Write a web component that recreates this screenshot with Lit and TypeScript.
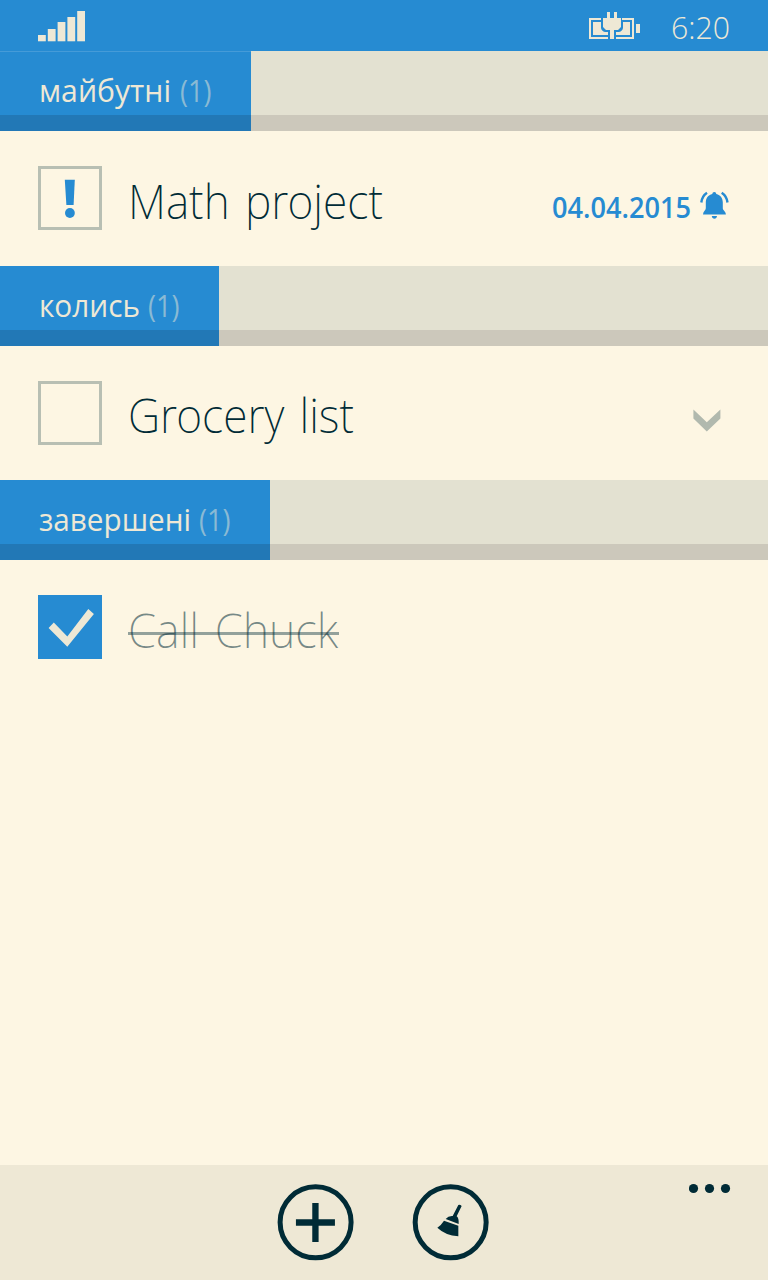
import { LitElement, html, css, svg, nothing } from "lit";
import { customElement, property } from "lit/decorators.js";

/** A single line of text fitted to an exact advance width. */
@customElement("fit-text")
class FitText extends LitElement {
  @property() text = "";
  @property({ type: Number }) width = 100;
  @property({ type: Number }) size = 32;
  @property({ type: Number }) weight = 400;
  @property({ type: Number }) baseline = 30;

  static styles = css`
    :host { display: block; flex: none; font-family: "Open Sans", "Noto Sans", sans-serif; }
    svg { display: block; overflow: visible; }
    text { fill: currentColor; }
  `;

  render() {
    return html`<svg width=${this.width} height="40">
      <text x="0" y=${this.baseline} font-size=${this.size} font-weight=${this.weight}
        textLength=${this.width} lengthAdjust="spacingAndGlyphs">${this.text}</text>
    </svg>`;
  }
}

@customElement("group-header")
class GroupHeader extends LitElement {
  @property() label = "";
  @property({ type: Number }) labelWidth = 100;
  @property({ type: Number }) gap = 9;
  @property({ type: Number }) tabWidth = 200;

  static styles = css`
    :host { display: block; height: 80px; background: linear-gradient(#e3e1d1 64px, #ccc8bb 64px); }
    .tab {
      box-sizing: border-box; height: 80px; padding: 21px 0 0 38.5px; display: flex;
      background: linear-gradient(#268bd2 64px, #2278b6 64px); color: #eee8d5;
    }
    :host(.first) .tab { box-shadow: inset 0 1px #459bd8; }
    .count { color: #8abad4; }
  `;

  render() {
    return html`<div class="tab" style="width:${this.tabWidth}px">
      <fit-text .text=${this.label} .width=${this.labelWidth} .size=${30.3} .baseline=${30.4}></fit-text>
      <fit-text class="count" style="margin-left:${this.gap}px" text="(1)" .width=${31.5} .size=${31} .baseline=${30.4}></fit-text>
    </div>`;
  }
}

@customElement("app-root")
class AppRoot extends LitElement {
  static styles = css`
    :host { display: flex; flex-direction: column; height: 1280px; width: 768px; background: #fdf6e3; color: #002b36; overflow: hidden; }
    svg { display: block; flex: none; }
    .status {
      height: 51px; box-sizing: border-box; flex: none; background: #268bd2; color: #eee8d5;
      display: flex; align-items: flex-start; padding: 11px 38px 0 38px;
    }
    .spacer { flex: 1; }
    .clock { margin: -2px 0 0 31px; }
    .power { margin-top: 1px; }
    .list { flex: 1; }
    .row { height: 134.5px; box-sizing: border-box; display: flex; align-items: flex-start; padding: 35.3px 38.4px 0; }
    .box { box-sizing: border-box; width: 64px; height: 64px; border: 3.2px solid #b8bfb3; flex: none; }
    .box svg { margin: -3px; }
    .done { background: #268bd2; border: 0; }
    .done svg { margin: 0; }
    .title { margin: 11.4px 0 0 25.6px; font-family: "Noto Sans", "Open Sans", sans-serif; word-spacing: 4px; }
    .struck { position: relative; color: rgba(0, 43, 54, 0.55); }
    .struck::after {
      content: ""; position: absolute; left: 0; right: -1px; top: 25.4px; height: 3.2px;
      background: rgba(0, 43, 54, 0.42);
    }
    .date { color: #268bd2; margin-top: 21.6px; }
    .bell { margin: 25.2px 0 0 9px; }
    .end { margin-right: 0.8px; display: flex; align-items: flex-start; }
    .chev { margin: 28.6px 8px 0 0; }
    .bar { height: 115px; flex: none; background: #eee8d5; display: grid; grid-template-columns: 277px 76px auto 1fr; }
    .bar .btn { margin-top: 19px; overflow: visible; }
    .bar .broom { margin-left: 59px; }
    .bar .more { justify-self: end; margin: 18px 37.5px 0 0; }
  `;

  row(icon: unknown, title: string, width: number, end: unknown, done = false) {
    return html`<div class="row">
      <div class="box ${done ? "done" : ""}">${icon}</div>
      <fit-text class="title ${done ? "struck" : ""}" .text=${title} .width=${width} .size=${47.5} .weight=${250} .baseline=${41.2}></fit-text>
      <div class="spacer"></div><div class="end">${end}</div>
    </div>`;
  }

  render() {
    const bars = [
      [0, 24], [9.8, 18], [19.6, 11], [29.4, 6], [39.2, 0],
    ].map(([x, y]) => svg`<rect x=${x} y=${y} width="7.8" height=${30.3 - y} />`);

    const alert = html`<svg width="64" height="64" viewBox="0 0 64 64" fill="#268bd2">
      <path d="M26.8 13.7H36.8L35.6 39H28.4Z" /><circle cx="31.9" cy="47" r="4.9" />
    </svg>`;
    const check = html`<svg width="64" height="64" viewBox="0 0 64 64" fill="#eee8d5">
      <path d="M10.6 33L15.8 27.5L29.3 41.5L50.3 14.1L55.9 19.1L29.3 51.8Z" />
    </svg>`;
    const bell = html`<svg class="bell" width="29" height="29" viewBox="0 0 29 29" fill="#268bd2">
      <path d="M14.3 1C15.5 1 16.2 1.8 16.3 3.1C20.6 4 22.8 7.6 22.8 11.6V17.3C22.8 19.2 25.9 20.7 25.9 23.5H3C3 20.7 5.8 19.2 5.8 17.3V11.6C5.8 7.6 8 4 12.3 3.1C12.4 1.8 13.1 1 14.3 1Z" />
      <path d="M11.8 25H17C16.8 26.8 15.8 27.8 14.4 27.8S12 26.8 11.8 25Z" />
      <path d="M7 1.7Q2 5 1.3 11.5M21.7 1.7Q26.8 5 27.5 11.5" fill="none" stroke="#268bd2" stroke-width="2.4" />
    </svg>`;
    const chevron = html`<svg class="chev" width="28" height="23" viewBox="0 0 28 23">
      <path d="M.4 .4L13.8 13.2L27.4 .4V9.6L13.8 22.4L.4 9.6Z" fill="#b1b9ae" />
    </svg>`;

    return html`
      <div class="status">
        <svg width="48" height="31" fill="#eee8d5">${bars}</svg>
        <div class="spacer"></div>
        <svg class="power" width="51" height="27" viewBox="0 0 51 27" fill="#eee8d5">
          <path d="M0 6H12V8H2V25H19V27H0ZM45 6H33V8H43V25H27V27H45Z" />
          <path d="M4 10H12V16Q12.5 19 16 20H19V23H4ZM41 10H34V16Q33.500 19 30 20H27V23H41Z" />
          <path d="M18 0H21V6H25V0H28V6H32V15L29 18H25V27H21V18H17L14 15V6H18Z" />
          <rect x="47" y="12" width="4" height="9" />
        </svg>
        <fit-text class="clock" text="6:20" .width=${59} .size=${32} .weight=${300}></fit-text>
      </div>
      <div class="list">
        <group-header class="first" label="майбутні" .labelWidth=${132} .tabWidth=${251}></group-header>
        ${this.row(alert, "Math project", 255, html`
          <fit-text class="date" text="04.04.2015" .width=${139} .size=${28.5} .weight=${600}></fit-text>${bell}`)}
        <group-header label="колись" .labelWidth=${101} .gap=${8} .tabWidth=${219}></group-header>
        ${this.row(nothing, "Grocery list", 226, chevron)}
        <group-header label="завершені" .labelWidth=${152} .gap=${8} .tabWidth=${270.4}></group-header>
        ${this.row(check, "Call Chuck", 210, nothing, true)}
      </div>
      <div class="bar">
        <div></div>
        <svg class="btn" width="76" height="76" viewBox="51.2 87 228 228">
          <circle cx="167" cy="202" r="106.5" fill="none" stroke="#002b36" stroke-width="15" />
          <path d="M157 144H176V192.5H225V212H176V261H157V212H108V192.5H157Z" fill="#002b36" />
        </svg>
        <svg class="btn broom" width="76" height="76" viewBox="456 87 228 228">
          <circle cx="572" cy="202" r="106.5" fill="none" stroke="#002b36" stroke-width="15" />
          <path d="M595 150Q600 148 605 153L590 184Q597 189 596 207L557 192Q565 182 578 183Z" fill="#002b36" />
          <path d="M552 197L595 212V244Q556 241 532 218Q544 210 552 197Z" fill="#002b36" />
        </svg>
        <svg class="more" width="42" height="11" fill="#002b36">
          <circle cx="4.5" cy="5.5" r="4.6" /><circle cx="20.5" cy="5.5" r="4.6" /><circle cx="36.5" cy="5.5" r="4.6" />
        </svg>
      </div>`;
  }
}
